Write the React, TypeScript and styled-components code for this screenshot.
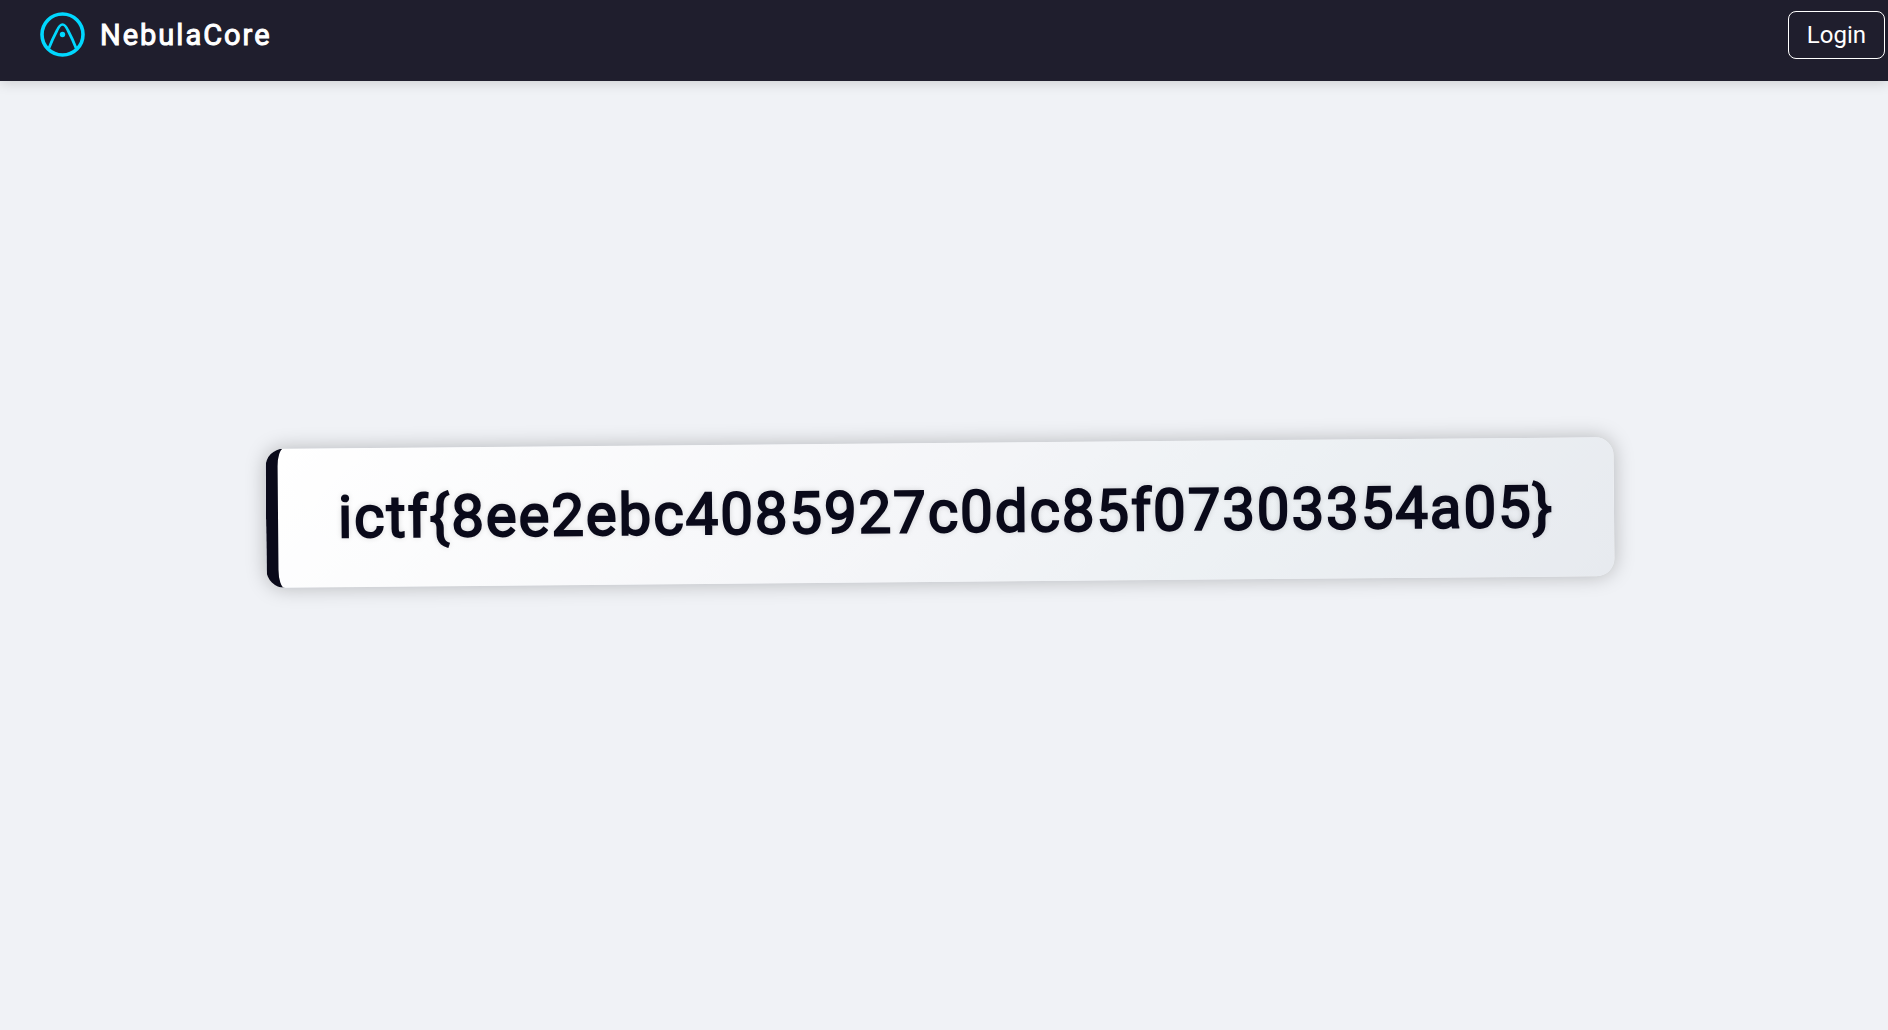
import React from "react";
import styled, { createGlobalStyle } from "styled-components";

const GlobalStyle = createGlobalStyle`
  *, *::before, *::after { box-sizing: border-box; }
  body {
    margin: 0;
    background: #f0f2f6;
    color: #0a0a1a;
    font-family: Roboto, "Liberation Sans", sans-serif;
  }
`;

const Page = styled.div`
  display: flex;
  flex-direction: column;
  min-height: 100vh;
`;

const Navbar = styled.header`
  display: flex;
  align-items: flex-start;
  justify-content: space-between;
  min-height: 81px;
  padding: 11px 3px 11px 40px;
  background: #1f1e2d;
  box-shadow: 0 2px 12px rgba(0, 0, 0, 0.15);
`;

const Brand = styled.a`
  display: flex;
  align-items: center;
  gap: 15px;
  color: #ffffff;
  font-size: 29px;
  font-weight: 400;
  line-height: 48px;
  letter-spacing: 2px;
  text-decoration: none;
  -webkit-text-stroke: 1px currentColor;
`;

const Logo = styled.svg`
  display: block;
  align-self: flex-start;
  width: 45px;
  height: 46px;
`;

const LoginButton = styled.button`
  height: 48px;
  padding: 0 18px;
  border: 1px solid #ffffff;
  border-radius: 8px;
  background: transparent;
  color: #ffffff;
  font-family: inherit;
  font-size: 24px;
  line-height: 46px;
  cursor: pointer;
`;

const Main = styled.main`
  display: flex;
  flex: 1;
  align-items: center;
  justify-content: center;
  padding: 0 8px 87px 0;
`;

const FlagCard = styled.h1`
  margin: 0;
  padding: 34px 60px;
  border-left: 12px solid #0a0a1a;
  border-radius: 18px;
  background: linear-gradient(135deg, #ffffff 0%, #f4f5f8 50%, #edf1f4 70%, #e7eaef 100%);
  box-shadow: 0 0 20px rgba(0, 0, 0, 0.25);
  color: #0a0a1a;
  font-size: 58px;
  font-weight: 400;
  line-height: 71px;
  letter-spacing: 2px;
  text-shadow: 0 0 6px rgba(0, 0, 0, 0.2);
  transform: rotate(-0.5deg);
  -webkit-text-stroke: 2px currentColor;
`;

export default function App() {
  return (
    <Page>
      <GlobalStyle />
      <Navbar>
        <Brand href="/">
          <Logo viewBox="0 0 45 46" fill="none" stroke="#00d8ff" aria-hidden="true">
            <circle cx="22.5" cy="23.5" r="20.5" strokeWidth="3.6" />
            <path d="M9 37 Q12 29 17 19.5 Q22.5 7.5 28 19.5 Q33 29 36 37" strokeWidth="2.7" />
            <circle cx="22.5" cy="23.5" r="2.7" fill="#00d8ff" stroke="none" />
          </Logo>
          NebulaCore
        </Brand>
        <LoginButton type="button">Login</LoginButton>
      </Navbar>
      <Main>
        <FlagCard>{"ictf{8ee2ebc4085927c0dc85f07303354a05}"}</FlagCard>
      </Main>
    </Page>
  );
}
